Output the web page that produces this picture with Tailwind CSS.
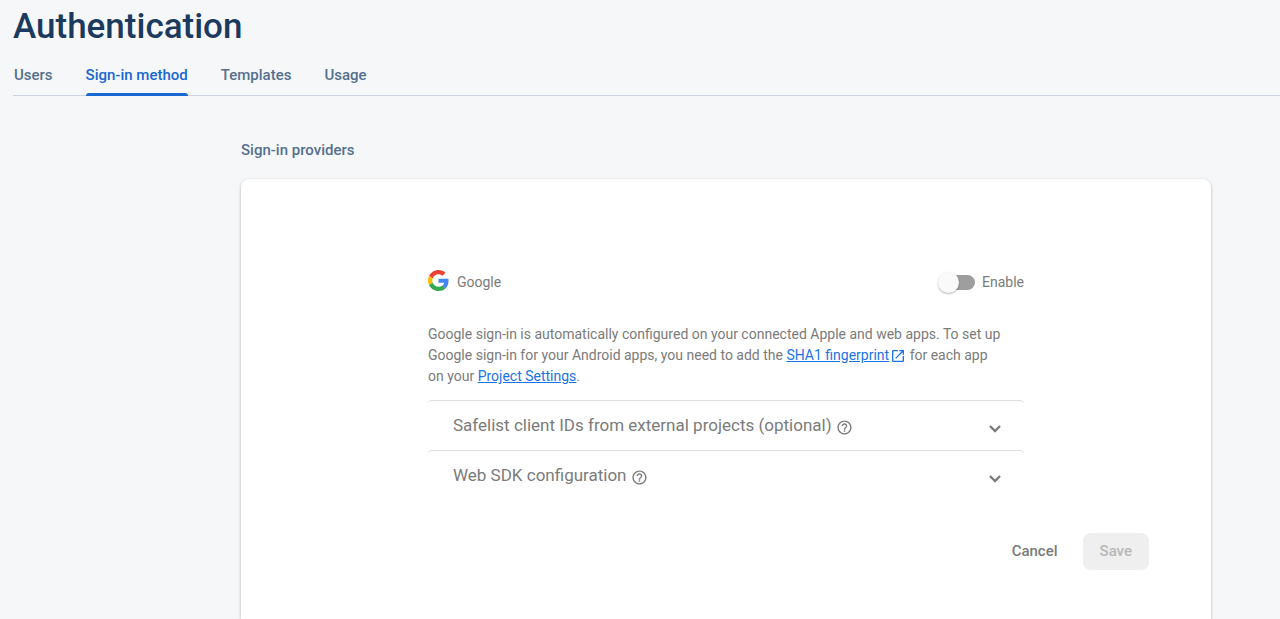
<!DOCTYPE html>
<html lang="en">
<head>
<meta charset="utf-8">
<meta name="viewport" content="width=device-width, initial-scale=1">
<title>Authentication</title>
<script src="https://cdn.jsdelivr.net/npm/@tailwindcss/browser@4"></script>
</head>
<body class="flex min-h-screen flex-col bg-[#f6f7f9] font-['Roboto',sans-serif] text-[#7b7b7b]">
<header class="pl-[13px]">
  <h1 class="pt-[5px] text-[35px] leading-[44px] font-medium text-[#1c3a5e]">Authentication</h1>
  <nav class="mt-[7px] flex h-10 gap-[33px] border-b border-[#ccd3e0] pl-px text-[15px] leading-[38px] font-medium text-[#55708f]">
    <a href="#users">Users</a>
    <a href="#sign-in" aria-current="page" class="relative text-[#1967d2]">Sign-in method<span class="absolute inset-x-0 -bottom-px h-[3px] rounded-t-[3px] bg-[#1967d2]"></span></a>
    <a href="#templates">Templates</a>
    <a href="#usage">Usage</a>
  </nav>
</header>
<main class="flex flex-1 flex-col pr-[69px] pl-[241px]">
  <h2 class="mt-11 mb-[19px] text-[15px] leading-5 font-medium text-[#55708f]">Sign-in providers</h2>
  <form class="flex-1 rounded-t-lg bg-white px-[62px] pt-[90px] pb-12 shadow-[0_1px_3px_rgba(0,0,0,0.3)]">
    <div class="mx-auto max-w-[596px]">
      <div class="flex h-[26px] items-center text-sm">
        <svg class="mr-2 mb-1 size-[21px]" viewBox="0 0 48 48" aria-hidden="true">
          <path fill="#EA4335" d="M24 9.5c3.54 0 6.71 1.22 9.21 3.6l6.85-6.85C35.9 2.38 30.47 0 24 0 14.62 0 6.51 5.38 2.56 13.22l7.98 6.19C12.43 13.72 17.74 9.5 24 9.5z"/>
          <path fill="#4285F4" d="M46.98 24.55c0-1.57-.15-3.09-.38-4.55H24v9.02h12.94c-.58 2.96-2.26 5.48-4.78 7.18l7.73 6c4.51-4.18 7.09-10.36 7.09-17.65z"/>
          <path fill="#FBBC05" d="M10.53 28.59c-.48-1.45-.76-2.99-.76-4.59s.27-3.14.76-4.59l-7.98-6.19C.92 16.46 0 20.12 0 24c0 3.88.92 7.54 2.56 10.78l7.97-6.19z"/>
          <path fill="#34A853" d="M24 48c6.48 0 11.93-2.13 15.89-5.81l-7.73-6c-2.15 1.45-4.92 2.3-8.16 2.3-6.26 0-11.57-4.22-13.47-9.91l-7.98 6.19C6.51 42.62 14.62 48 24 48z"/>
        </svg>
        <span>Google</span>
        <label class="ml-auto flex items-center gap-[7px]">
          <span class="relative flex h-[21px] w-[37px] items-center">
            <input type="checkbox" role="switch" class="peer ml-1 h-[15px] w-[33px] appearance-none rounded-full bg-[#9e9e9e] checked:bg-[#8ab4f8]">
            <span class="pointer-events-none absolute left-0 size-[21px] rounded-full bg-[#fafafa] shadow-[0_1px_2px_rgba(0,0,0,0.3)] peer-checked:left-4 peer-checked:bg-[#1967d2]"></span>
          </span>
          Enable
        </label>
      </div>
      <p class="mt-[29px] max-w-[580px] text-sm leading-[21px]">Google sign-in is automatically configured on your connected Apple and web apps. To set up Google sign-in for your Android apps, you need to add the <a href="#sha1" class="text-[#1a73e8]"><span class="underline">SHA1 fingerprint</span><svg class="ml-px inline size-4 align-[-4px]" viewBox="0 0 24 24" fill="currentColor" aria-hidden="true"><path d="M19 19H5V5h7V3H5a2 2 0 0 0-2 2v14a2 2 0 0 0 2 2h14a2 2 0 0 0 2-2v-7h-2v7zM14 3v2h3.59l-9.83 9.83 1.41 1.41L19 6.41V10h2V3h-7z"/></svg></a> for each app<br>on your <a href="#settings" class="text-[#1a73e8] underline">Project Settings</a>.</p>
      <div class="mt-[13px] text-[17px]">
        <button type="button" class="flex h-[50px] w-full items-center rounded-t border-t border-[#dedede] pr-[21px] pl-[25px]">
          <span>Safelist client IDs from external projects (optional)</span>
          <svg class="mt-[3px] ml-1 size-[17px]" viewBox="0 0 24 24" fill="currentColor" aria-hidden="true"><path d="M11 18h2v-2h-2v2zm1-16C6.48 2 2 6.48 2 12s4.48 10 10 10 10-4.48 10-10S17.52 2 12 2zm0 18c-4.41 0-8-3.59-8-8s3.59-8 8-8 8 3.59 8 8-3.59 8-8 8zm0-14c-2.21 0-4 1.79-4 4h2c0-1.1.9-2 2-2s2 .9 2 2c0 2-3 1.75-3 5h2c0-2.25 3-2.5 3-5 0-2.21-1.79-4-4-4z"/></svg>
          <svg class="mt-[7px] ml-auto h-2 w-4" viewBox="0 0 16 8" fill="none" stroke="currentColor" stroke-width="2.4" aria-hidden="true"><path d="M3 1l5 5 5-5"/></svg>
        </button>
        <button type="button" class="flex h-[50px] w-full items-center rounded-t border-t border-[#dedede] pr-[21px] pl-[25px]">
          <span>Web SDK configuration</span>
          <svg class="mt-[3px] ml-1 size-[17px]" viewBox="0 0 24 24" fill="currentColor" aria-hidden="true"><path d="M11 18h2v-2h-2v2zm1-16C6.48 2 2 6.48 2 12s4.48 10 10 10 10-4.48 10-10S17.52 2 12 2zm0 18c-4.41 0-8-3.59-8-8s3.59-8 8-8 8 3.59 8 8-3.59 8-8 8zm0-14c-2.21 0-4 1.79-4 4h2c0-1.1.9-2 2-2s2 .9 2 2c0 2-3 1.75-3 5h2c0-2.25 3-2.5 3-5 0-2.21-1.79-4-4-4z"/></svg>
          <svg class="mt-[7px] ml-auto h-2 w-4" viewBox="0 0 16 8" fill="none" stroke="currentColor" stroke-width="2.4" aria-hidden="true"><path d="M3 1l5 5 5-5"/></svg>
        </button>
      </div>
    </div>
    <div class="mt-[33px] flex justify-end gap-2 text-[15px] font-medium">
      <button type="button" class="h-[37px] rounded-lg px-[17px]">Cancel</button>
      <button type="submit" disabled class="h-[37px] rounded-lg bg-[#efefef] px-[17px] text-[#b8b8b8]">Save</button>
    </div>
  </form>
</main>
</body>
</html>
